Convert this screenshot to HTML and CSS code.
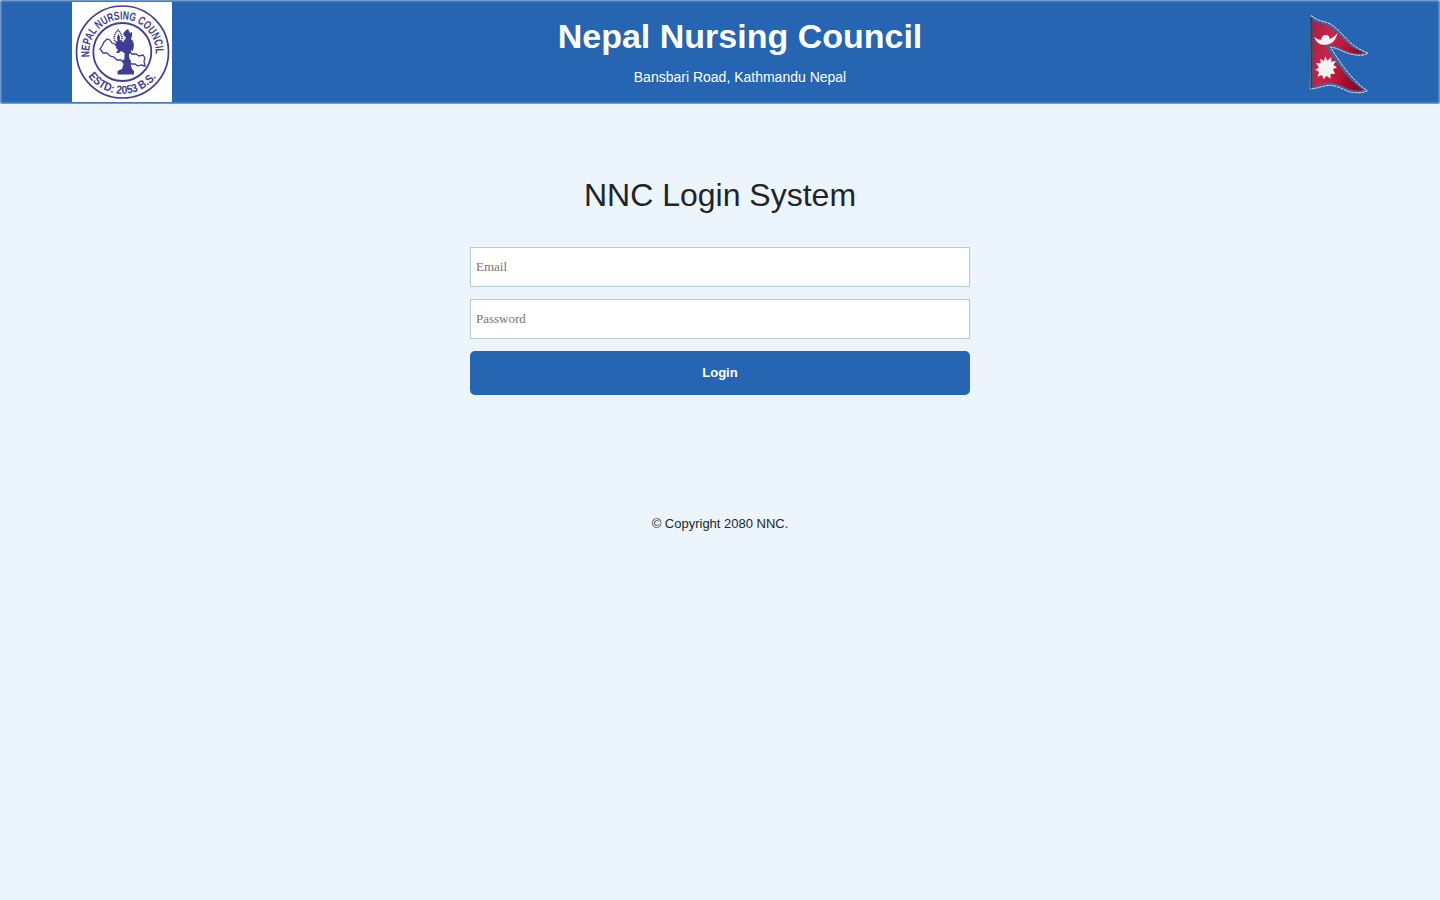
FILE: index.html
```html
<!DOCTYPE html>
<html lang="en">
<head>
<meta charset="utf-8">
<title>Nepal Nursing Council</title>
<link rel="stylesheet" href="styles.css">
</head>
<body>
<header class="header">
  <svg class="logo" viewBox="0 0 100 100" role="img" aria-label="Council seal">
    <defs>
      <path id="arc-top" d="M17.6 55A33.2 33.2 0 1 1 83.4 55"/>
      <path id="arc-bottom" d="M16.2 74.2A42 42 0 0 0 84.8 74.2"/>
    </defs>
    <rect width="100" height="100" fill="#fff"/>
    <g fill="none" stroke="#3f3d94">
      <circle cx="50.5" cy="50" r="46" stroke-width="1.7"/>
      <circle cx="50.3" cy="50" r="29" stroke-width="1.8"/>
      <path d="M32 40L35 37L38 38L40 41L43 42L45 45L49 46L52 49L57 49L60 52L64 52L67 54L71 53L73 56L72 59L73 64L69 63L66 64L63 62L59 62L56 60L53 62L49 58L45 58L42 55L38 54L35 51L31 51L28 47L30 44Z" stroke-width="1.3"/>
      <path d="M46 41C40 39 42 32 46 28C50 32 52 38 47 41" stroke-width="1.7" stroke-dasharray="1.2 .7"/>
    </g>
    <path fill="#3f3d94" d="M53 29L56 27L58 31L60 30L60 34L59 37L61 39L62 43L61 49L59 48L59 51L57 52L57.5 57L59 59L58.5 62L60 67L62 69V72.5H45.5V69L50 67L51.5 62L50 59L52.5 57V51L49 49L47 51H44L46 48L44 46V40L48 38L51 40L54 36L51 32ZM45 35L46.5 32L48 35L47.5 40H45.5Z"/>
    <text class="seal-text"><textPath href="#arc-top" textLength="110" lengthAdjust="spacingAndGlyphs">NEPAL NURSING COUNCIL</textPath></text>
    <text class="seal-text"><textPath href="#arc-bottom" textLength="79" lengthAdjust="spacingAndGlyphs">ESTD: 2053 B.S.</textPath></text>
  </svg>
  <div class="heading">
    <h1 class="name">Nepal Nursing Council</h1>
    <p class="address">Bansbari Road, Kathmandu Nepal</p>
  </div>
  <svg class="flag" viewBox="23 30 180 240" role="img" aria-label="Flag of Nepal">
    <defs>
      <linearGradient id="red" x2="1" y2=".35">
        <stop offset="0" stop-color="#a51f45"/>
        <stop offset=".4" stop-color="#c92449"/>
        <stop offset=".65" stop-color="#bd1737"/>
        <stop offset="1" stop-color="#8f0825"/>
      </linearGradient>
    </defs>
    <path d="M33 32C56 51 73 47 92 58C122 78 137 105 163 123C178 133 190 140 203 144C197 151 175 153 154 148C130 143 113 129 91 126C104 150 122 176 142 201C161 223 182 246 201 257C187 265 166 265 145 260C126 252 106 240 86 241C65 243 50 251 30 252Z" fill="#43649f" stroke="#d5dce5" stroke-width="3" stroke-dasharray="9 2"/>
    <path d="M36 44C57 56 72 54 88 65C116 85 132 109 156 127L190 143C168 151 139 140 119 129C101 119 88 119 76 124C97 158 117 186 138 210C156 231 172 245 188 254C174 259 156 256 138 249C116 239 99 231 82 233C65 235 52 242 37 243Z" fill="url(#red)"/>
    <path d="M33 36V250" fill="none" stroke="#343c4b" stroke-width="6"/>
    <path d="M42 95C49 102 55 105 63 104C63 96 68 90 76 90C84 90 88 95 88 102C97 99 105 92 111 84C108 105 94 119 76 119C58 121 45 109 42 95Z" fill="#f5f4f5"/>
    <path d="M75 153L81 167L93 156L93 170L107 168L99 180L110 187L98 193L104 207L91 206L90 221L79 212L70 223L65 210L52 215L56 200L45 195L56 187L47 175L61 175L60 161L71 168Z" fill="#f5f4f5"/>
  </svg>
</header>
<main class="login">
  <h2 class="title">NNC Login System</h2>
  <form class="form">
    <input class="field" type="email" placeholder="Email" aria-label="Email">
    <input class="field" type="password" placeholder="Password" aria-label="Password">
    <button class="submit" type="button">Login</button>
  </form>
</main>
<footer class="footer">© Copyright 2080 NNC.</footer>
</body>
</html>
```
FILE: styles.css
```css
* { box-sizing: border-box; }
body {
  margin: 0;
  background: #ecf4fc;
  color: #212529;
  font-family: "Liberation Sans", Arial, sans-serif;
}
.header {
  display: flex;
  align-items: center;
  justify-content: space-between;
  height: 104px;
  padding: 0 72px;
  background: #2565b2;
  color: #fff;
  box-shadow: inset 0 0 3px #fff;
}
.logo { width: 100px; height: 100px; }
.seal-text {
  font: bold 11.8px "Liberation Sans", Arial, sans-serif;
  fill: #3f3d94;
}
.heading { align-self: flex-start; padding-top: 16px; text-align: center; }
.name { margin: 0; font-size: 34px; line-height: 41px; }
.address { margin: 10px 0 0; font-size: 14px; line-height: 21px; }
.flag { width: 60px; height: 80px; margin-top: 6px; }
.login { width: 500px; margin: 72px auto 0; }
.title {
  margin: 0 0 33px;
  font-size: 32px;
  font-weight: 400;
  line-height: 38px;
  text-align: center;
}
.form { display: flex; flex-direction: column; gap: 12px; }
.field {
  height: 40px;
  padding: 0 5px;
  border: 1px solid #b2cdd7;
  background: #fff;
  font: 13px "Liberation Serif", "Times New Roman", serif;
}
.field::placeholder { color: #757575; }
.submit {
  height: 44px;
  padding: 0 6px 2px;
  border: 0;
  border-radius: 5px;
  background: #2565b2;
  color: #fff;
  font: bold 13px "Liberation Sans", Arial, sans-serif;
}
.footer { margin-top: 119px; font-size: 13px; line-height: 20px; text-align: center; }
```
